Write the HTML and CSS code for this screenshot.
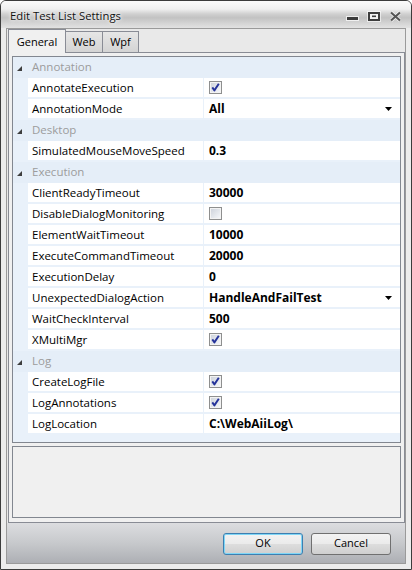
FILE: index.html
```html
<!DOCTYPE html>
<html>
<head>
<meta charset="utf-8">
<title>Edit Test List Settings</title>
<link rel="stylesheet" href="styles.css">
</head>
<body>
<svg class="defs" width="0" height="0" aria-hidden="true">
  <defs>
    <linearGradient id="cbg" x1="0" y1="0" x2="1" y2="1">
      <stop offset="0" stop-color="#cfd4dc"/>
      <stop offset="1" stop-color="#f4f6f9"/>
    </linearGradient>
    <symbol id="box" viewBox="0 0 13 13">
      <rect x="0.5" y="0.5" width="12" height="12" fill="#f3f3f3" stroke="#8e8f8f"/>
      <rect x="2" y="2" width="9" height="9" fill="url(#cbg)"/>
    </symbol>
    <symbol id="chk" viewBox="0 0 13 13">
      <use href="#box"/>
      <path d="M3.3 6.4 L5.4 9.4 L9.8 2.8" fill="none" stroke="#25339a" stroke-width="1.9" stroke-linejoin="round"/>
    </symbol>
    <symbol id="drop" viewBox="0 0 7 4">
      <polygon points="0,0 7,0 3.5,4" fill="#000"/>
    </symbol>
    <symbol id="tri" viewBox="0 0 5 5">
      <polygon points="5,0 5,5 0,5" fill="#3e3e3e"/>
    </symbol>
  </defs>
</svg>
<div class="window">
  <div class="titlebar">
    <span class="title">Edit Test List Settings</span>
    <div class="controls">
      <svg class="ctl" width="13" height="11" viewBox="0 0 13 11">
        <rect x="0" y="5" width="13" height="5" fill="#ffffff" opacity="0.7"/>
        <rect x="1" y="6" width="11" height="3" fill="#3b3b3b"/>
      </svg>
      <svg class="ctl" width="14" height="11" viewBox="0 0 14 11">
        <rect x="0" y="0" width="14" height="11" fill="#ffffff" opacity="0.6"/>
        <rect x="2" y="2" width="10" height="7" fill="#f2f2f2" stroke="#3d3d3d" stroke-width="2"/>
        <rect x="5" y="4.5" width="4" height="1.6" fill="#3d3d3d"/>
      </svg>
      <svg class="ctl" width="13" height="11" viewBox="0 0 13 11">
        <path d="M2 1.5 L11 9.5 M11 1.5 L2 9.5" stroke="#ffffff" stroke-width="3.6" opacity="0.8"/>
        <path d="M2 1.5 L11 9.5 M11 1.5 L2 9.5" stroke="#575757" stroke-width="2.2"/>
      </svg>
    </div>
  </div>
  <div class="frame">
    <div class="client">
      <div class="tabstrip">
        <div class="tab active">General</div>
        <div class="tab">Web</div>
        <div class="tab">Wpf</div>
      </div>
      <div class="panel">
        <div class="grid">
          <div class="cat"><svg class="tri"><use href="#tri"/></svg>Annotation</div>
          <div class="prop"><div class="strip"></div><div class="name">AnnotateExecution</div><div class="value"><svg class="cb"><use href="#chk"/></svg></div></div>
          <div class="prop"><div class="strip"></div><div class="name">AnnotationMode</div><div class="value"><span>All</span><svg class="dd"><use href="#drop"/></svg></div></div>
          <div class="cat"><svg class="tri"><use href="#tri"/></svg>Desktop</div>
          <div class="prop"><div class="strip"></div><div class="name">SimulatedMouseMoveSpeed</div><div class="value"><span>0.3</span></div></div>
          <div class="cat"><svg class="tri"><use href="#tri"/></svg>Execution</div>
          <div class="prop"><div class="strip"></div><div class="name">ClientReadyTimeout</div><div class="value"><span>30000</span></div></div>
          <div class="prop"><div class="strip"></div><div class="name">DisableDialogMonitoring</div><div class="value"><svg class="cb"><use href="#box"/></svg></div></div>
          <div class="prop"><div class="strip"></div><div class="name">ElementWaitTimeout</div><div class="value"><span>10000</span></div></div>
          <div class="prop"><div class="strip"></div><div class="name">ExecuteCommandTimeout</div><div class="value"><span>20000</span></div></div>
          <div class="prop"><div class="strip"></div><div class="name">ExecutionDelay</div><div class="value"><span>0</span></div></div>
          <div class="prop"><div class="strip"></div><div class="name">UnexpectedDialogAction</div><div class="value"><span>HandleAndFailTest</span><svg class="dd"><use href="#drop"/></svg></div></div>
          <div class="prop"><div class="strip"></div><div class="name">WaitCheckInterval</div><div class="value"><span>500</span></div></div>
          <div class="prop"><div class="strip"></div><div class="name">XMultiMgr</div><div class="value"><svg class="cb"><use href="#chk"/></svg></div></div>
          <div class="cat"><svg class="tri"><use href="#tri"/></svg>Log</div>
          <div class="prop"><div class="strip"></div><div class="name">CreateLogFile</div><div class="value"><svg class="cb"><use href="#chk"/></svg></div></div>
          <div class="prop"><div class="strip"></div><div class="name">LogAnnotations</div><div class="value"><svg class="cb"><use href="#chk"/></svg></div></div>
          <div class="prop"><div class="strip"></div><div class="name">LogLocation</div><div class="value"><span>C:\WebAiiLog\</span></div></div>
        </div>
        <div class="desc"></div>
      </div>
      <div class="buttons">
        <button class="btn default">OK</button>
        <button class="btn">Cancel</button>
      </div>
    </div>
  </div>
</div>
</body>
</html>
```
FILE: styles.css
```css
* { box-sizing: border-box; }
html, body { margin: 0; padding: 0; }
body {
  width: 412px;
  height: 570px;
  overflow: hidden;
  background: #ffffff;
  font-family: "Open Sans", "Noto Sans", sans-serif;
  font-size: 11px;
  color: #000;
}
.defs { position: absolute; width: 0; height: 0; }
.window {
  width: 412px;
  height: 570px;
  border: 1px solid #3c3c3c;
  border-radius: 6px 6px 0 0;
  background: #ececec;
  display: flex;
  flex-direction: column;
  overflow: hidden;
}
.titlebar {
  height: 27px;
  flex: none;
  display: flex;
  align-items: flex-start;
  padding: 0 9px 0 9px;
  background: linear-gradient(to bottom, #fbfbfb 0%, #f0f0f0 30%, #d0d0d0 48%, #c2c2c2 62%, #d2d2d2 80%, #e2e2e2 100%);
}
.title {
  padding-top: 7px;
  font-size: 11.3px;
  line-height: 15px;
  color: #111;
  text-shadow: 0 0 5px #fff, 0 0 3px #fff;
}
.controls {
  margin-left: auto;
  margin-top: 10px;
  display: flex;
  gap: 8px;
}
.ctl { display: block; }
.frame {
  flex: 1;
  display: flex;
  flex-direction: column;
  padding: 0 5px 5px 5px;
  background: #ececec;
}
.client {
  flex: 1;
  display: flex;
  flex-direction: column;
  border: 1px solid #9a9a9a;
  background: #e9e9e9;
}
.tabstrip {
  height: 23px;
  flex: none;
  display: flex;
  align-items: flex-end;
  padding-left: 1px;
}
.tab {
  height: 21px;
  border: 1px solid #898c95;
  border-bottom: none;
  background: linear-gradient(to bottom, #e6e6e6, #d4d4d4);
  text-align: center;
  line-height: 15px;
  padding-top: 2px;
  margin-left: -1px;
}
.tab:first-child { margin-left: 0; width: 58px; }
.tab:nth-child(2) { width: 38px; }
.tab:nth-child(3) { width: 37px; }
.tab.active {
  height: 24px;
  margin-bottom: -1px;
  padding-top: 4px;
  background: #f0f0f0;
  position: relative;
  z-index: 1;
}
.panel {
  flex: 1;
  margin-left: 1px;
  border: 1px solid #898c95;
  background: #f0f0f0;
  padding: 3px 3px 4px 3px;
  display: flex;
  flex-direction: column;
  gap: 3px;
}
.grid {
  height: 387px;
  flex: none;
  border: 1px solid #828790;
  background: #e9f1fa;
  display: flex;
  flex-direction: column;
}
.cat {
  height: 21px;
  flex: none;
  display: flex;
  align-items: flex-start;
  font-size: 11.5px;
  line-height: 19px;
  padding-left: 4px;
  color: #9c9c9c;
  background: #e5eef8;
}
.tri {
  width: 5px;
  height: 5px;
  margin-top: 9px;
  margin-right: 10px;
  flex: none;
}
.prop {
  height: 21px;
  flex: none;
  display: flex;
  gap: 1px;
}
.strip { width: 14px; flex: none; }
.name {
  width: 175px;
  flex: none;
  height: 19px;
  font-size: 11.5px;
  line-height: 19px;
  padding-left: 4px;
  background: #fff;
  white-space: nowrap;
  overflow: hidden;
}
.value {
  flex: 1;
  height: 19px;
  line-height: 19px;
  padding-left: 5px;
  background: #fff;
  font-size: 12px;
  font-weight: 700;
  display: flex;
  align-items: center;
  white-space: nowrap;
}
.cb { width: 13px; height: 13px; display: block; }
.dd { width: 7px; height: 4px; margin-left: auto; margin-right: 8px; display: block; }
.desc {
  flex: 1;
  border: 1px solid #828790;
  background: #f0f0f0;
}
.buttons {
  height: 40px;
  flex: none;
  display: flex;
  justify-content: flex-end;
  align-items: flex-start;
  gap: 8px;
  padding: 10px 14px 0 0;
  background: linear-gradient(to bottom, #dcdde0 0%, #c7c9cc 50%, #adafb4 100%);
}
.btn {
  width: 80px;
  height: 22px;
  padding: 0 0 2px 0;
  border: 1px solid #707070;
  border-radius: 3px;
  background: linear-gradient(to bottom, #f3f3f3 0%, #ebebeb 48%, #dddddd 52%, #cfcfcf 100%);
  font-family: "Open Sans", "Noto Sans", sans-serif;
  font-size: 11px;
  line-height: 18px;
  color: #000;
}
.btn.default {
  border-color: #3c7fb1;
  box-shadow: inset 0 0 0 1px #7fd6f6;
}
```
